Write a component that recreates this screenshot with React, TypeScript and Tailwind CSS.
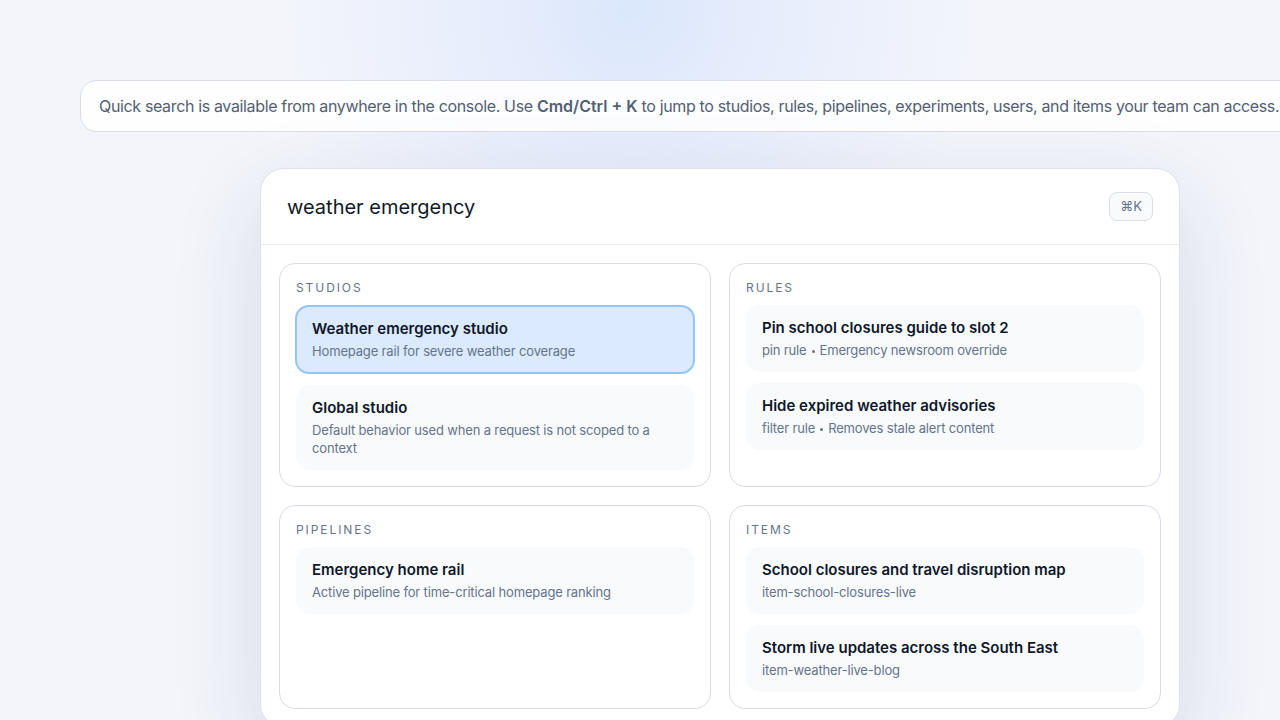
import React from "react";

type Result = { title: string; sub: string; active?: boolean };

const groups: { label: string; items: Result[] }[] = [
  {
    label: "Studios",
    items: [
      { title: "Weather emergency studio", sub: "Homepage rail for severe weather coverage", active: true },
      { title: "Global studio", sub: "Default behavior used when a request is not scoped to a context" },
    ],
  },
  {
    label: "Rules",
    items: [
      { title: "Pin school closures guide to slot 2", sub: "pin rule • Emergency newsroom override" },
      { title: "Hide expired weather advisories", sub: "filter rule • Removes stale alert content" },
    ],
  },
  {
    label: "Pipelines",
    items: [{ title: "Emergency home rail", sub: "Active pipeline for time-critical homepage ranking" }],
  },
  {
    label: "Items",
    items: [
      { title: "School closures and travel disruption map", sub: "item-school-closures-live" },
      { title: "Storm live updates across the South East", sub: "item-weather-live-blog" },
    ],
  },
];

function ResultRow({ r }: { r: Result }) {
  const parts = r.sub.split(" • ");
  return (
    <div
      className={`rounded-[14px] py-3 px-[15px] ${
        r.active ? "-mx-px border-2 border-[#93c5fd] bg-[#dbeafe]" : "border border-transparent bg-[#f8fafc]"
      }`}
    >
      <div className="text-[15px] leading-5 font-semibold text-[#0f172a]">{r.title}</div>
      <div className="mt-[3px] text-[13px] leading-[18px] tracking-[-0.012em] text-[#64748b]">
        {parts.length > 1 ? (
          <>
            {parts[0]}
            <span className="mx-[5px] inline-block h-[3px] w-[3px] rounded-full bg-current align-middle" />
            {parts[1]}
          </>
        ) : (
          r.sub
        )}
      </div>
    </div>
  );
}

export default function App() {
  return (
    <div
      className="min-h-screen w-full overflow-hidden bg-[#f3f5fb] font-['Inter',sans-serif] pl-20 pt-20"
      style={{
        backgroundImage:
          "radial-gradient(circle at 630px 10px, #dbe7fc 0px, rgba(226,234,252,0.8) 120px, rgba(243,245,251,0) 350px)",
      }}
    >
      {/* Hint banner */}
      <div className="w-max rounded-2xl border border-[#d9dee8] bg-white/90 px-[18px] py-[13px] text-[16px] leading-6 tracking-[-0.022em] text-[#536072] whitespace-nowrap">
        Quick search is available from anywhere in the console. Use{" "}
        <span className="font-semibold tracking-normal">Cmd/Ctrl + K</span> to jump to studios, rules, pipelines,
        experiments, users, and items your team can access.
      </div>

      {/* Command palette */}
      <div className="mt-9 ml-[180px] w-[920px] rounded-[24px] border border-[#dfe3ec] bg-white shadow-[0_30px_90px_rgba(30,41,80,0.13)]">
        <div className="flex h-[76px] items-center justify-between border-b border-[#e8ebf1] px-[26px]">
          <div className="text-[20px] text-[#111827]">weather emergency</div>
          <div className="flex h-[29px] w-[44px] items-center justify-center rounded-lg border border-[#d9dee8] bg-[#f8fafc] text-[13px] text-[#64748b]">
            ⌘K
          </div>
        </div>

        <div className="grid grid-cols-2 gap-[18px] p-[18px]">
          {groups.map((g) => (
            <div key={g.label} className="rounded-2xl border border-[#d8dde6] bg-white p-4">
              <div className="text-[12px] leading-4 uppercase tracking-[0.16em] text-[#64748b]">{g.label}</div>
              <div className="mt-[9px] flex flex-col gap-[11px]">
                {g.items.map((r) => (
                  <ResultRow key={r.title} r={r} />
                ))}
              </div>
            </div>
          ))}
        </div>
      </div>
    </div>
  );
}
